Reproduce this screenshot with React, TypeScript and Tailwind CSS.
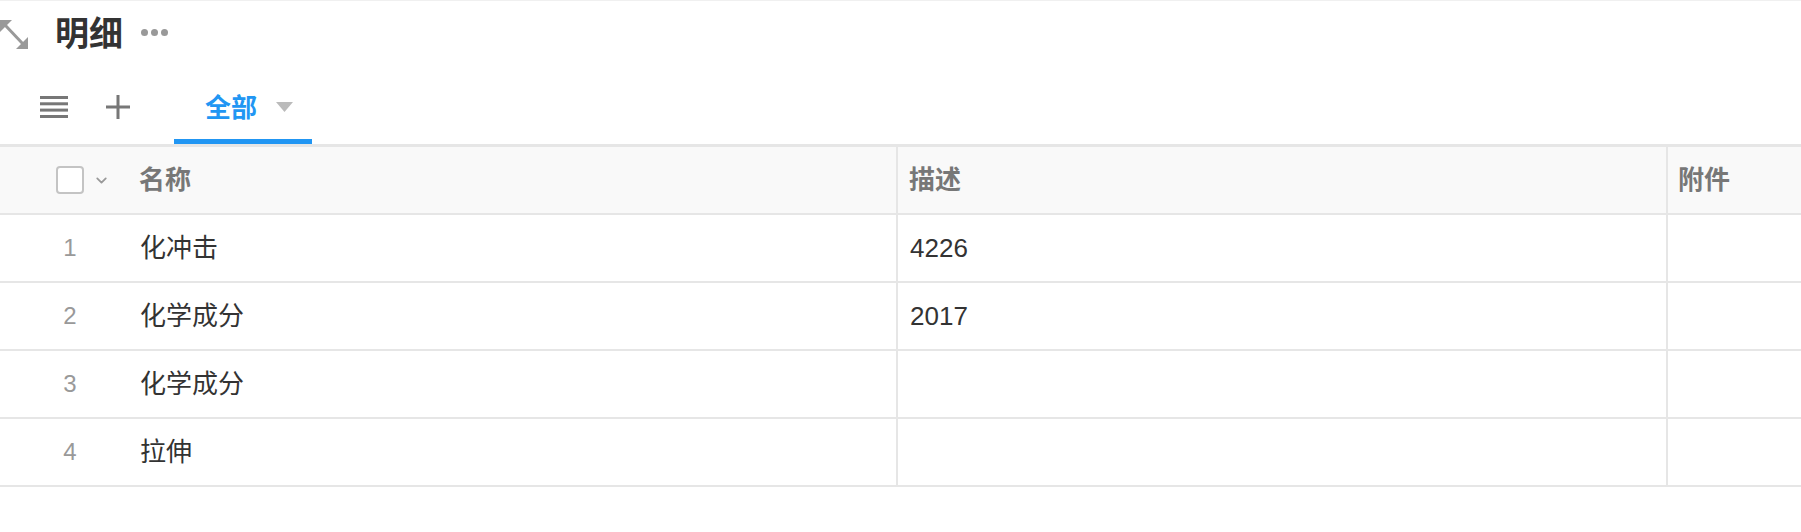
import React from "react";
import { ChevronDown } from "lucide-react";

const rows = [
  { no: 1, name: "化冲击", desc: "4226" },
  { no: 2, name: "化学成分", desc: "2017" },
  { no: 3, name: "化学成分", desc: "" },
  { no: 4, name: "拉伸", desc: "" },
];

function ExpandIcon() {
  return (
    <svg width="28" height="29" viewBox="0 0 28 29" aria-hidden="true">
      <line x1="5" y1="5" x2="23" y2="24" stroke="#999" strokeWidth="3" />
      <polygon points="0,0 12,0 0,12" fill="#999" />
      <polygon points="28,29 16,29 28,17" fill="#999" />
    </svg>
  );
}

function MenuIcon() {
  return (
    <svg width="28" height="22" viewBox="0 0 28 22" aria-hidden="true">
      <rect x="0" y="0" width="28" height="3" fill="#777" />
      <rect x="0" y="6.3" width="28" height="3" fill="#777" />
      <rect x="0" y="12.6" width="28" height="3" fill="#777" />
      <rect x="0" y="19" width="28" height="3" fill="#777" />
    </svg>
  );
}

function PlusIcon() {
  return (
    <svg width="24" height="24" viewBox="0 0 24 24" aria-hidden="true">
      <rect x="10.5" y="0" width="3" height="24" fill="#777" />
      <rect x="0" y="10.5" width="24" height="3" fill="#777" />
    </svg>
  );
}

export default function App() {
  return (
    <div
      className="w-[1801px] h-[532px] bg-white border-t border-[#f0f0f0] overflow-hidden"
      style={{ fontFamily: '"Liberation Sans", "Noto Sans CJK SC", sans-serif' }}
    >
      {/* Title */}
      <div className="h-[66px] flex items-center">
        <ExpandIcon />
        <h1 className="ml-[27px] text-[34px] font-bold text-[#333] leading-none">明细</h1>
        <div className="ml-[18px] flex items-center gap-[3px] mb-[4px]">
          <span className="w-[7px] h-[7px] rounded-full bg-[#999]" />
          <span className="w-[7px] h-[7px] rounded-full bg-[#999]" />
          <span className="w-[7px] h-[7px] rounded-full bg-[#999]" />
        </div>
      </div>

      {/* Tabs */}
      <div className="h-[80px] flex items-stretch border-b-[3px] border-[#e6e6e6]">
        <div className="flex items-center pl-[40px] pt-[2px]">
          <MenuIcon />
          <div className="ml-[38px]">
            <PlusIcon />
          </div>
        </div>
        <div className="ml-[44px] w-[138px] flex items-center pl-[31px] pt-[10px] border-b-[5px] border-[#2196f3]">
          <span className="text-[26px] font-bold text-[#2196f3] leading-none">全部</span>
          <svg width="17" height="10" viewBox="0 0 17 10" className="ml-[19px] mb-[2px]" aria-hidden="true">
            <polygon points="0,0 17,0 8.5,10" fill="#bbb" />
          </svg>
        </div>
      </div>

      {/* Table */}
      <div className="w-full">
        <div className="h-[68px] flex bg-[#f9f9f9] border-b-2 border-[#e6e6e6]">
          <div className="w-[128px] flex items-center pl-[56px]">
            <span className="w-[28px] h-[28px] rounded-[4px] border-2 border-[#c4c4c4] bg-white" />
            <ChevronDown className="ml-[9px] text-[#999]" size={17} strokeWidth={2.5} />
          </div>
          <div className="w-[768px] flex items-center pl-[11px] text-[26px] font-bold text-[#777]">名称</div>
          <div className="w-[2px] bg-[#e6e6e6]" />
          <div className="w-[768px] flex items-center pl-[11px] text-[26px] font-bold text-[#777]">描述</div>
          <div className="w-[2px] bg-[#e6e6e6]" />
          <div className="flex-1 flex items-center pl-[10px] text-[26px] font-bold text-[#777]">附件</div>
        </div>
        {rows.map((r) => (
          <div key={r.no} className="h-[68px] flex border-b-2 border-[#e6e6e6]">
            <div className="w-[128px] flex items-center pl-[56px]">
              <span className="w-[28px] text-center text-[24px] text-[#999]">{r.no}</span>
            </div>
            <div className="w-[768px] flex items-center pl-[12px] text-[26px] text-[#333]">{r.name}</div>
            <div className="w-[2px] bg-[#e6e6e6]" />
            <div className="w-[768px] flex items-center pl-[12px] text-[26px] text-[#333]">{r.desc}</div>
            <div className="w-[2px] bg-[#e6e6e6]" />
            <div className="flex-1" />
          </div>
        ))}
      </div>
    </div>
  );
}
